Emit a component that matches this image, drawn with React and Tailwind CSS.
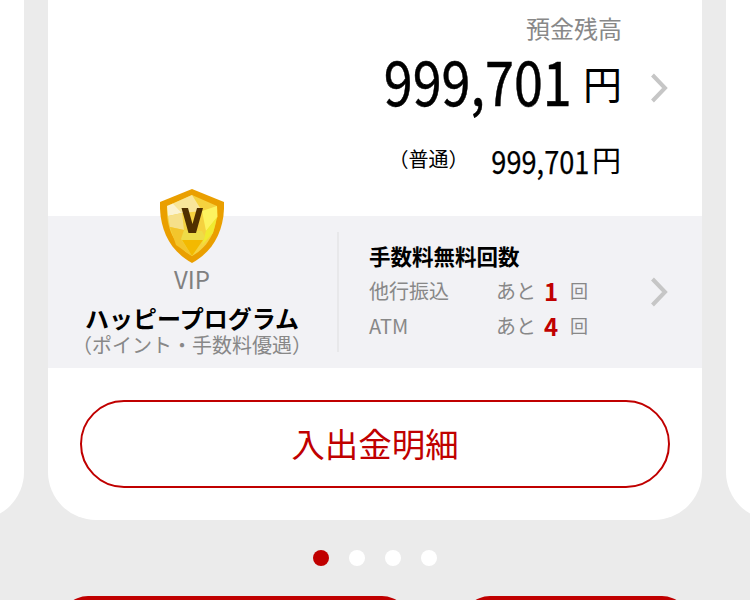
import React from 'react';

const font = { fontFamily: '"Noto Sans CJK JP", "Noto Sans", sans-serif' };

function Chevron() {
  return (
    <svg width="18" height="30" viewBox="0 0 18 30" className="shrink-0">
      <path d="M2.5 2 L15 15 L2.5 28" fill="none" stroke="#c6c6c6" strokeWidth="4" />
    </svg>
  );
}

function Shield() {
  return (
    <svg width="64" height="74" viewBox="0 0 64 74" className="relative shrink-0">
      <path d="M32 0 L64 13 C65 40 54 62 32 74 C10 62 -1 40 0 13 Z" fill="#ea9f00" />
      <path d="M32 6 L57 17 C58 39 50 57 32 67 C14 57 6 39 7 17 Z" fill="#f5d23f" />
      <polygon points="32,6 13,14.5 22,24 42,22" fill="#f8e69a" />
      <polygon points="13,14.5 7,17 8,27 22,24" fill="#fbf3d0" />
      <polygon points="42,22 57,17 57.5,28 46,42" fill="#fdf35f" />
      <polygon points="46,42 57,28 53,44 42,56" fill="#f0ea30" />
      <polygon points="8,27 22,24 24,41 10,38" fill="#f6e08a" />
      <polygon points="10,38 24,41 32,67 16,56" fill="#f3c52c" />
      <polygon points="24,41 42,42 45,48 32,67 21,50" fill="#eedc48" />
      <polygon points="22,51 43,51 32,67" fill="#f3b900" />
      <path d="M21.5 19 H28 L32.5 35 L37 19 H43 L36 44 H28.5 Z" fill="#503000" />
    </svg>
  );
}

function FeeRow({ label, count }) {
  return (
    <div className="flex items-center h-[35px] text-[20px] text-[#888888]">
      <span className="w-[127px]">{label}</span>
      <span className="w-[42px] whitespace-nowrap">あと</span>
      <span className="w-[26px] text-center text-[24px] font-bold text-[#c00000]">{count}</span>
      <span className="ml-[6px] text-[18px]">回</span>
    </div>
  );
}

export default function App() {
  return (
    <div className="h-[600px] overflow-hidden bg-[#ebebeb]" style={font}>
      {/* カルーセル */}
      <div className="flex justify-center gap-6 h-[520px]">
        <div className="w-[654px] shrink-0 bg-white rounded-b-[48px]" />
        <div className="w-[654px] shrink-0 bg-white rounded-b-[48px] overflow-hidden flex flex-col">
          {/* 残高 */}
          <div className="h-[216px] flex flex-col">
            <p className="h-[58px] pr-[80px] text-right text-[24px] leading-[56px] text-[#888888]">預金残高</p>
            <div className="h-[60px] flex items-center justify-end pr-[34px] text-black">
              <span className="inline-block text-[62px] leading-none origin-right scale-x-[0.84] mr-[11px] -mt-[18px] [-webkit-text-stroke:0.5px_#000]">999,701</span>
              <span className="text-[39px] leading-none -mt-[12px]">円</span>
              <span className="ml-[28px] flex"><Chevron /></span>
            </div>
            <div className="mt-[12px] h-[60px] flex items-center justify-end pr-[81px] text-black">
              <span className="text-[20px] mr-[22px] -mt-[3px]">（普通）</span>
              <span className="inline-block -ml-[17px] text-[32px] leading-none origin-right scale-x-[0.85] mr-[3px] [-webkit-text-stroke:0.25px_#000]">999,701</span>
              <span className="text-[29px] leading-none -mt-[2px]">円</span>
            </div>
          </div>

          {/* VIP・手数料 */}
          <div className="h-[152px] bg-[#f2f2f5] flex items-center">
            <div className="w-[288px] h-full flex flex-col items-center">
              <div className="-mt-[27px]"><Shield /></div>
              <p className="mt-[1px] text-[24px] leading-[30px] text-[#808080]">VIP</p>
              <p className="mt-[10px] text-[24px] leading-[28px] font-bold text-black">ハッピープログラム</p>
              <p className="text-[20px] leading-[26px] text-[#888888] whitespace-nowrap">（ポイント・手数料優遇）</p>
            </div>
            <div className="ml-[1px] w-[2px] h-[120px] bg-[#e8e8ea]" />
            <div className="flex-1 h-full flex items-center pl-[30px] pr-[34px]">
              <div className="flex-1 self-start pt-[25px]">
                <p className="text-[21.5px] leading-[30px] font-bold text-black whitespace-nowrap">手数料無料回数</p>
                <div className="mt-[2px]">
                  <FeeRow label="他行振込" count="1" />
                  <FeeRow label="ATM" count="4" />
                </div>
              </div>
              <Chevron />
            </div>
          </div>

          {/* ボタン */}
          <div className="px-8 pt-8">
            <button className="w-full h-[88px] pb-[2px] rounded-full border-2 border-[#c00000] text-[33.5px] text-[#c00000]">入出金明細</button>
          </div>
        </div>
        <div className="w-[654px] shrink-0 bg-white rounded-b-[48px]" />
      </div>

      {/* ページネーション */}
      <div className="mt-[30px] flex justify-center gap-5">
        <span className="w-4 h-4 rounded-full bg-[#c00000]" />
        <span className="w-4 h-4 rounded-full bg-white" />
        <span className="w-4 h-4 rounded-full bg-white" />
        <span className="w-4 h-4 rounded-full bg-white" />
      </div>

      {/* 下部ボタン */}
      <div className="mt-[30px] flex pl-[60px] gap-[52px]">
        <div className="w-[350px] h-[80px] rounded-[28px] bg-[#c00000]" />
        <div className="w-[228px] h-[80px] rounded-[28px] bg-[#c00000]" />
      </div>
    </div>
  );
}
